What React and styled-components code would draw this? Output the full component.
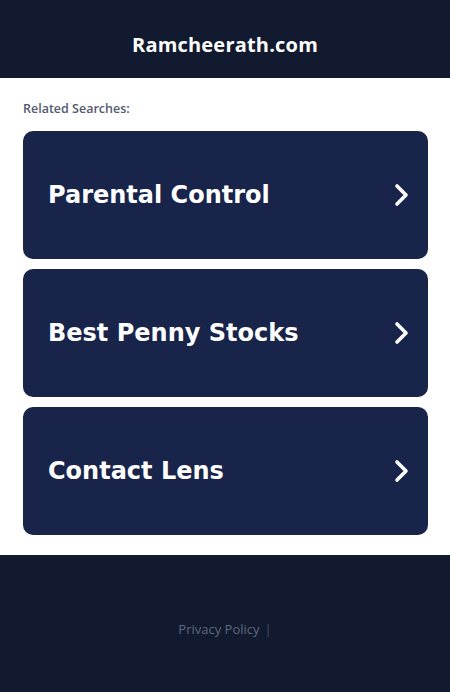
import React from 'react';
import styled, { createGlobalStyle } from 'styled-components';

const GlobalStyle = createGlobalStyle`
    body {
        margin: 0;
        background: #fff;
        font-family: "Open Sans", "Liberation Sans", sans-serif;
    }
`;

const Header = styled.header`
    height: 78px;
    box-sizing: border-box;
    padding-top: 10px;
    background-color: #111a2e;
    display: flex;
    align-items: center;
    justify-content: center;
`;

const Title = styled.h1`
    margin: 0;
    color: #fff;
    font-family: "Open Sans", "Liberation Sans", sans-serif;
    font-size: 20px;
    font-weight: 700;
    letter-spacing: 0.2px;
`;

const Main = styled.main`
    padding: 22px 22px 20px 23px;
    display: flex;
    flex-direction: column;
`;

const Label = styled.div`
    font-size: 12.5px;
    font-weight: 600;
    color: #525a70;
    margin-bottom: 14px;
`;

const List = styled.div`
    display: flex;
    flex-direction: column;
    gap: 10px;
`;

const Card = styled.a`
    height: 128px;
    border-radius: 10px;
    background-color: #19244a;
    display: flex;
    align-items: center;
    justify-content: space-between;
    padding: 0 18px 0 25px;
    text-decoration: none;
    color: #fff;
`;

const CardText = styled.span`
    font-family: "DejaVu Sans", Verdana, sans-serif;
    font-size: 24px;
    font-weight: 700;
`;

const Footer = styled.footer`
    height: 137px;
    box-sizing: border-box;
    padding-top: 10px;
    background-color: #111a2e;
    display: flex;
    align-items: center;
    justify-content: center;
`;

const FooterLink = styled.a`
    font-size: 13px;
    color: #5f6780;
    text-decoration: none;
    &::after {
        content: "|";
        margin-left: 5px;
        color: #4b5264;
    }
`;

const Chevron = () => (
    <svg width="20" height="26" viewBox="0 0 20 26" fill="none">
        <path d="M7 4 L16 13 L7 22" stroke="#fff" strokeWidth="3.6" strokeLinecap="round" strokeLinejoin="round" />
    </svg>
);

const searches = ["Parental Control", "Best Penny Stocks", "Contact Lens"];

function App() {
    return (
        <>
            <GlobalStyle />
            <Header>
                <Title>Ramcheerath.com</Title>
            </Header>
            <Main>
                <Label>Related Searches:</Label>
                <List>
                    {searches.map(s => (
                        <Card href="#" key={s}>
                            <CardText>{s}</CardText>
                            <Chevron />
                        </Card>
                    ))}
                </List>
            </Main>
            <Footer>
                <FooterLink href="#">Privacy Policy</FooterLink>
            </Footer>
        </>
    );
}

export default App;
